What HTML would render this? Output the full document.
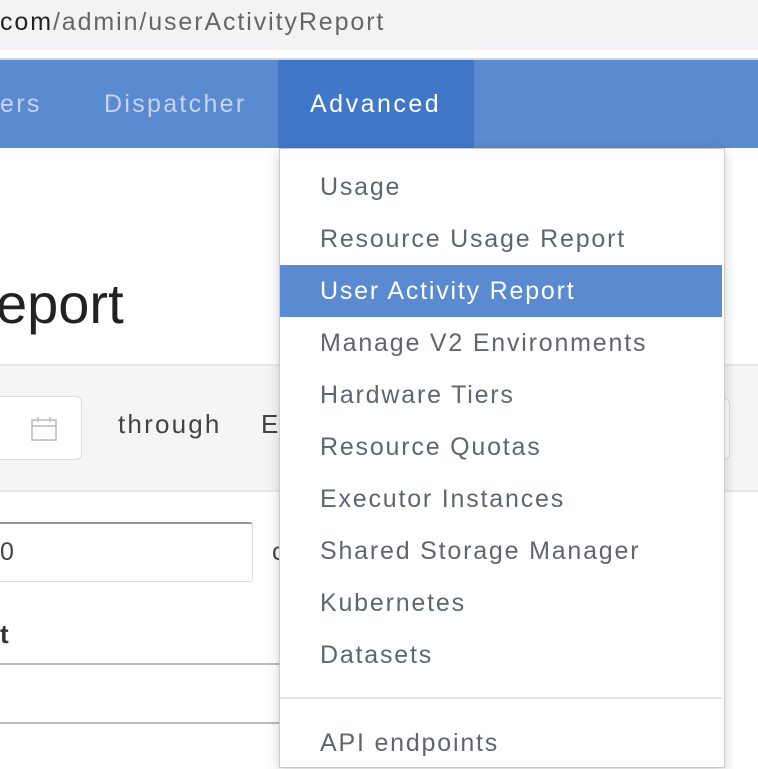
<!DOCTYPE html>
<html><head><style>
*{margin:0;padding:0;box-sizing:border-box}
body{width:758px;height:752px;overflow:hidden;position:relative;background:#fff;font-family:"Liberation Sans",sans-serif}
.a{position:absolute;white-space:nowrap}
.dd div{position:absolute;left:0;width:442px;height:52px;line-height:52px;padding-left:40px;font-size:25px;letter-spacing:1.8px;color:#5f6670}
</style></head><body>
<div class="a" style="left:0;top:0;width:758px;height:50px;background:#f2f3f5"></div>
<div class="a" style="left:0;top:4px;font-size:25px;line-height:36px;color:#666;letter-spacing:1.9px"><span style="color:#222">com</span>/admin/userActivityReport</div>
<div class="a" style="left:0;top:58px;width:758px;height:2px;background:#d4d6d9"></div>
<div class="a" style="left:0;top:60px;width:758px;height:88px;background:#5a8ad0"></div>
<div class="a" style="left:278px;top:60px;width:196px;height:88px;background:#4177c9"></div>
<div class="a" style="left:0;top:60px;line-height:88px;font-size:25px;letter-spacing:2.3px;color:#c4d5f0">ers</div>
<div class="a" style="left:104px;top:60px;line-height:88px;font-size:25px;letter-spacing:2.3px;color:#c4d5f0">Dispatcher</div>
<div class="a" style="left:310px;top:60px;line-height:88px;font-size:25px;letter-spacing:2.5px;color:#fff">Advanced</div>

<div class="a" style="left:-4px;top:268px;font-size:56px;line-height:72px;color:#222">eport</div>
<div class="a" style="left:0;top:364px;width:758px;height:128px;background:#f5f5f5;border-top:2px solid #e6e8eb;border-bottom:2px solid #e6e8eb"></div>
<div class="a" style="left:-10px;top:396px;width:92px;height:64px;background:#fff;border:1px solid #ddd;border-radius:6px"></div>
<svg class="a" style="left:31px;top:416px" width="26" height="26" viewBox="0 0 26 26" fill="none" stroke="#bbb" stroke-width="1.5"><rect x="1" y="4" width="24" height="20"/><line x1="1" y1="10" x2="25" y2="10"/><line x1="7" y1="1" x2="7" y2="6"/><line x1="19" y1="1" x2="19" y2="6"/></svg>
<div class="a" style="left:118px;top:408px;font-size:26px;line-height:32px;letter-spacing:2.2px;color:#444">through</div>
<div class="a" style="left:261px;top:408px;font-size:26px;line-height:32px;color:#444">E</div>
<div class="a" style="left:600px;top:398px;width:130px;height:62px;background:#fff;border:1px solid #ddd;border-radius:6px"></div>
<div class="a" style="left:-10px;top:522px;width:263px;height:60px;border:1px solid #ddd;border-top:2px solid #999;border-radius:3px"></div>
<div class="a" style="left:0;top:536px;font-size:25px;line-height:32px;color:#444">0</div>
<div class="a" style="left:272px;top:536px;font-size:25px;line-height:32px;color:#444">c</div>
<div class="a" style="left:0;top:618px;font-size:26px;line-height:32px;color:#333;font-weight:bold">t</div>
<div class="a" style="left:0;top:663px;width:300px;height:2px;background:#bbb"></div>
<div class="a" style="left:0;top:722px;width:300px;height:2px;background:#bbb"></div>

<div class="a dd" style="left:279px;top:148px;width:446px;height:620px;background:#fff;border:1px solid #ccc;box-shadow:0 4px 12px rgba(0,0,0,.18)">
<div style="top:12px">Usage</div>
<div style="top:64px">Resource Usage Report</div>
<div style="top:116px;background:#5a8ad0;color:#fff">User Activity Report</div>
<div style="top:168px">Manage V2 Environments</div>
<div style="top:220px">Hardware Tiers</div>
<div style="top:272px">Resource Quotas</div>
<div style="top:324px">Executor Instances</div>
<div style="top:376px">Shared Storage Manager</div>
<div style="top:428px">Kubernetes</div>
<div style="top:480px">Datasets</div>
<div style="top:548px;height:2px;background:#e5e5e5;padding:0"></div>
<div style="top:568px">API endpoints</div>
</div>
</body></html>
